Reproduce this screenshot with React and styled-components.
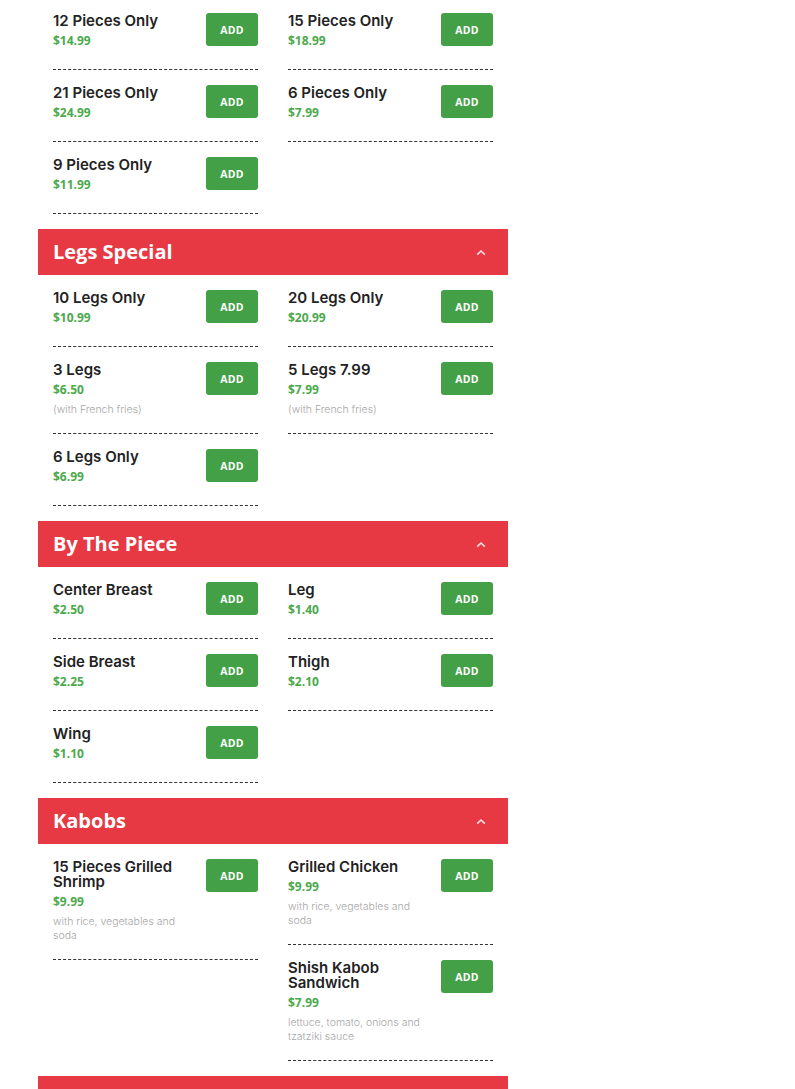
import React from "react";
import styled, { createGlobalStyle } from "styled-components";

const Global = createGlobalStyle`
  html, body { margin: 0; padding: 0; background: #fff; }
  body { font-family: "Open Sans", "Liberation Sans", sans-serif; }
`;

const Page = styled.div`
  width: 470px;
  margin-left: 38px;
`;

const Header = styled.div`
  height: 46px;
  background: #e63943;
  display: flex;
  align-items: center;
  justify-content: space-between;
  padding: 0 22px 0 15px;
  box-sizing: border-box;
  color: #fff;
`;

const HeaderTitle = styled.h2`
  margin: 0;
  font-family: "Open Sans", sans-serif;
  font-weight: 700;
  font-size: 20px;
  line-height: 46px;
`;

const Grid = styled.div`
  display: grid;
  grid-template-columns: 205px 205px;
  column-gap: 30px;
  align-items: start;
  padding: 0 15px 15px;
  margin-top: ${(p) => (p.$clip ? "-2px" : "0")};
`;

const Column = styled.div`
  display: flex;
  flex-direction: column;
`;

const Item = styled.div`
  display: flex;
  justify-content: space-between;
  align-items: flex-start;
  padding: 15px 0 18px;
  border-bottom: 1px dashed #333;
`;

const Info = styled.div`
  max-width: 70%;
`;

const Name = styled.div`
  font-family: "Inter", sans-serif;
  font-weight: 600;
  font-size: 15px;
  line-height: 15px;
  color: #222;
`;

const Price = styled.div`
  margin-top: 3px;
  font-family: "Open Sans", sans-serif;
  font-weight: 700;
  font-size: 12px;
  line-height: 20px;
  color: #4caa4c;
`;

const Desc = styled.div`
  margin: 3px 0 -2px;
  font-family: "Inter", sans-serif;
  font-weight: 300;
  font-size: 10.5px;
  line-height: 14px;
  color: #a6a6a6;
`;

const AddButton = styled.button`
  width: 52px;
  height: 33px;
  border: none;
  border-radius: 3px;
  background: #43a047;
  color: #fff;
  font-family: "Open Sans", sans-serif;
  font-weight: 700;
  font-size: 10.5px;
  letter-spacing: 0.3px;
  padding: 0;
  flex-shrink: 0;
`;

const Chevron = () => (
  <svg width="10" height="7" viewBox="0 0 10 7">
    <polyline points="1.2,5.6 5,2 8.8,5.6" fill="none" stroke="rgba(255,255,255,0.85)" strokeWidth="1.6" />
  </svg>
);

const sections = [
  {
    title: null,
    cols: [
      [
        { n: "12 Pieces Only", p: "$14.99" },
        { n: "21 Pieces Only", p: "$24.99" },
        { n: "9 Pieces Only", p: "$11.99" },
      ],
      [
        { n: "15 Pieces Only", p: "$18.99" },
        { n: "6 Pieces Only", p: "$7.99" },
      ],
    ],
  },
  {
    title: "Legs Special",
    cols: [
      [
        { n: "10 Legs Only", p: "$10.99" },
        { n: "3 Legs", p: "$6.50", d: "(with French fries)" },
        { n: "6 Legs Only", p: "$6.99" },
      ],
      [
        { n: "20 Legs Only", p: "$20.99" },
        { n: "5 Legs 7.99", p: "$7.99", d: "(with French fries)" },
      ],
    ],
  },
  {
    title: "By The Piece",
    cols: [
      [
        { n: "Center Breast", p: "$2.50" },
        { n: "Side Breast", p: "$2.25" },
        { n: "Wing", p: "$1.10" },
      ],
      [
        { n: "Leg", p: "$1.40" },
        { n: "Thigh", p: "$2.10" },
      ],
    ],
  },
  {
    title: "Kabobs",
    cols: [
      [{ n: "15 Pieces Grilled Shrimp", p: "$9.99", d: "with rice, vegetables and soda" }],
      [
        { n: "Grilled Chicken", p: "$9.99", d: "with rice, vegetables and soda" },
        { n: "Shish Kabob Sandwich", p: "$7.99", d: "lettuce, tomato, onions and tzatziki sauce" },
      ],
    ],
  },
  { title: "", cols: [[], []] },
];

export default function App() {
  return (
    <>
      <Global />
      <Page>
        {sections.map((s, i) => (
          <section key={i}>
            {s.title !== null && (
              <Header>
                <HeaderTitle>{s.title}</HeaderTitle>
                <Chevron />
              </Header>
            )}
            <Grid $clip={s.title === null}>
              {s.cols.map((col, ci) => (
                <Column key={ci}>
                  {col.map((it) => (
                    <Item key={it.n}>
                      <Info>
                        <Name>{it.n}</Name>
                        <Price>{it.p}</Price>
                        {it.d && <Desc>{it.d}</Desc>}
                      </Info>
                      <AddButton>ADD</AddButton>
                    </Item>
                  ))}
                </Column>
              ))}
            </Grid>
          </section>
        ))}
      </Page>
    </>
  );
}
